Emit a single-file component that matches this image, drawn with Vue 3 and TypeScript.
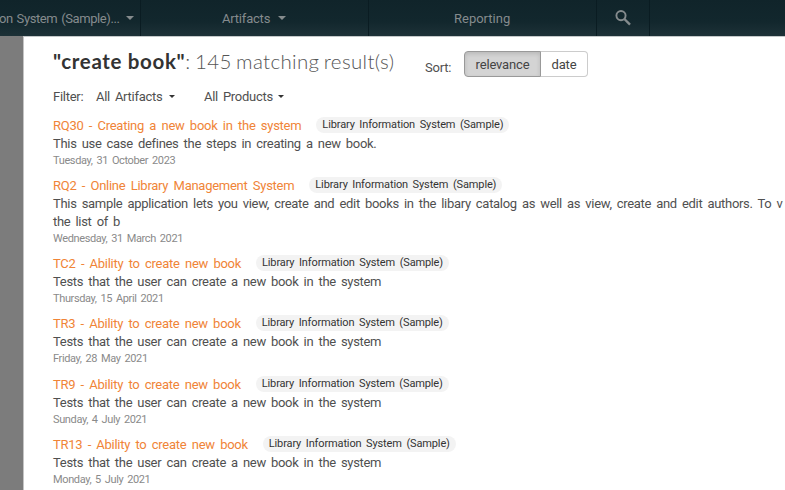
<script setup lang="ts">
interface Result {
  id: string
  title: string
  lines: string[]
  date: string
}

const product = 'Library Information System (Sample)'
const testText = 'Tests that the user can create a new book in the system'

const results: Result[] = [
  { id: 'RQ30', title: 'Creating a new book in the system', lines: ['This use case defines the steps in creating a new book.'], date: 'Tuesday, 31 October 2023' },
  {
    id: 'RQ2',
    title: 'Online Library Management System',
    lines: [
      'This sample application lets you view, create and edit books in the libary catalog as well as view, create and edit authors. To v',
      'the list of b',
    ],
    date: 'Wednesday, 31 March 2021',
  },
  { id: 'TC2', title: 'Ability to create new book', lines: [testText], date: 'Thursday, 15 April 2021' },
  { id: 'TR3', title: 'Ability to create new book', lines: [testText], date: 'Friday, 28 May 2021' },
  { id: 'TR9', title: 'Ability to create new book', lines: [testText], date: 'Sunday, 4 July 2021' },
  { id: 'TR13', title: 'Ability to create new book', lines: [testText], date: 'Monday, 5 July 2021' },
]
</script>

<template>
  <div class="page">
    <nav class="nav">
      <div class="cell product"><span>on System (Sample)...</span><i class="caret" /></div>
      <div class="cell artifacts"><span>Artifacts</span><i class="caret" /></div>
      <div class="cell reporting"><span>Reporting</span></div>
      <div class="cell search">
        <svg width="16" height="16" viewBox="0 0 16 16" fill="none" stroke="currentColor">
          <circle cx="6" cy="5.6" r="4.6" stroke-width="1.9" />
          <path d="M9.4 9L15 14.6" stroke-width="2.4" />
        </svg>
      </div>
      <div class="cell rest" />
    </nav>
    <main class="panel">
      <header class="head">
        <h1><b>"create book"</b><span>: 145 matching result(s)</span></h1>
        <span class="sort">Sort:</span>
        <div class="group">
          <button class="btn active">relevance</button><button class="btn date-btn">date</button>
        </div>
      </header>
      <div class="filters">
        <span class="label">Filter:</span>
        <span class="drop first">All Artifacts</span><i class="caret" />
        <span class="drop second">All Products</span><i class="caret" />
      </div>
      <article v-for="r in results" :key="r.id" class="result">
        <div class="title-row">
          <a class="title">{{ r.id }} - {{ r.title }}</a>
          <span class="badge">{{ product }}</span>
        </div>
        <p v-for="line in r.lines" :key="line" class="text">{{ line }}</p>
        <div class="date">{{ r.date }}</div>
      </article>
    </main>
  </div>
</template>

<style>
body {
  overflow: hidden;
}
</style>

<style scoped>
.page {
  width: 785px;
  height: 490px;
  overflow: hidden;
  background: #7c7c7c;
  font-family: Roboto, "Liberation Sans", sans-serif;
  font-size: 13px;
  color: #505050;
  white-space: nowrap;
}
.nav {
  display: flex;
  height: 36px;
  background: linear-gradient(#10242a 0%, #12272d 60%, #1d3137 100%);
  color: #858b8d;
}
.cell {
  box-sizing: border-box;
  display: flex;
  align-items: center;
  border-right: 1px solid #0a1c22;
  flex: none;
}
.caret {
  border: 4px solid transparent;
  border-top-color: currentColor;
  border-bottom: 0;
}
.product { width: 141px; gap: 6px; letter-spacing: -0.4px; word-spacing: 1px; }
.product span { margin-left: -1px; }
.artifacts { width: 228px; padding-left: 81px; gap: 8px; letter-spacing: -0.2px; }
.reporting { width: 228px; padding-left: 85px; }
.search { width: 53px; padding-left: 18px; }
.rest { flex: 1; border: 0; }
.panel {
  box-sizing: border-box;
  width: 762px;
  height: 454px;
  margin-left: 23px;
  padding: 12px 0 0 29px;
  border-left: 1px solid #c4c4c4;
  border-top: 1px solid #c4c8c9;
  background: #fff;
}
.head {
  display: flex;
  height: 34px;
}
h1 {
  flex: none;
  width: 372px;
  margin: 0;
  font: 300 20.5px/24px Lato, sans-serif;
  color: #333;
}
h1 b { font-weight: 700; letter-spacing: 0.65px; }
h1 span { letter-spacing: 0.35px; word-spacing: -1.5px; color: #555; }
.sort { line-height: 37px; width: 39px; letter-spacing: -0.2px; }
.group { display: flex; height: 26px; margin-top: 2px; }
.btn {
  box-sizing: border-box;
  height: 26px;
  padding: 0;
  font: inherit;
  letter-spacing: -0.15px;
  color: #444;
  border: 1px solid #ccc;
  background: #fff;
}
.active {
  width: 77px;
  border-color: #999;
  border-radius: 4px 0 0 4px;
  background: #d4d4d4;
  box-shadow: inset 0 2px 4px rgba(0, 0, 0, 0.13);
}
.date-btn { width: 47px; border-left: 0; border-radius: 0 4px 4px 0; }
.filters {
  display: flex;
  align-items: center;
  height: 27px;
  margin-bottom: 7px;
  letter-spacing: -0.28px;
  word-spacing: 2px;
}
.filters .caret { border-width: 3px; border-bottom: 0; color: #333; }
.label { width: 43px; }
.drop { width: 73px; }
.first + .caret { margin-right: 29px; }
.second { width: 74px; }
.result { margin-bottom: 9.15px; }
.title-row { display: flex; height: 18px; line-height: 18px; }
.title { color: #f08437; letter-spacing: -0.27px; word-spacing: 2.4px; }
.badge {
  box-sizing: border-box;
  height: 16px;
  margin-left: 15px;
  padding: 0 6px;
  border-radius: 8px;
  background: #f3f3f3;
  color: #333;
  font-size: 11px;
  line-height: 15px;
  letter-spacing: -0.13px;
  word-spacing: 2px;
}
.text { margin: 0; height: 18px; line-height: 18px; letter-spacing: -0.31px; word-spacing: 2.2px; }
.date { height: 15px; font-size: 11px; line-height: 15px; letter-spacing: -0.37px; word-spacing: 1.5px; color: #8a8a8a; }
</style>
